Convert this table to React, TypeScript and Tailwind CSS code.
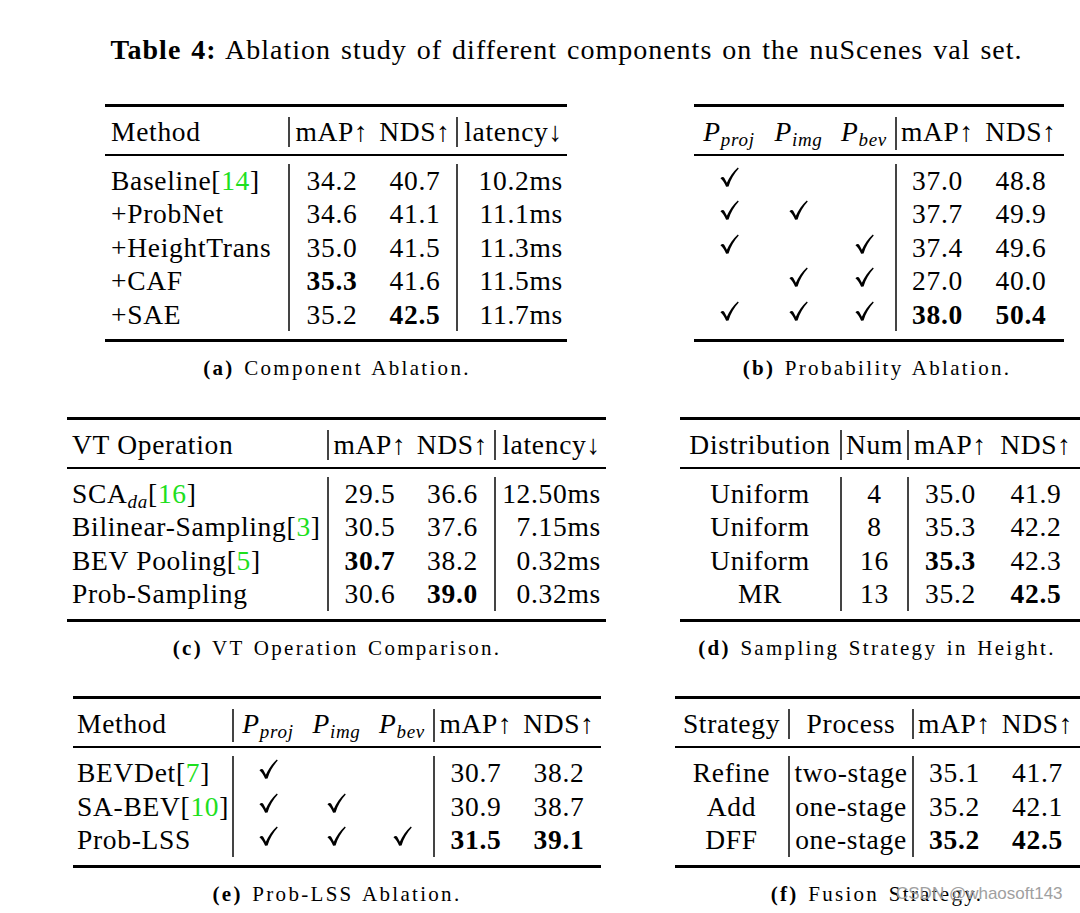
import React from "react";

type Col = { cls: string; v?: boolean };

const VL = "border-l-2 border-[#444]";

function G({ children }: { children: React.ReactNode }) {
  return <span className="text-[#1ee01e]">{children}</span>;
}

function B({ children }: { children: React.ReactNode }) {
  return <span className="font-bold">{children}</span>;
}

function Check() {
  return (
    <svg
      viewBox="0 0 18 19"
      className="inline-block w-[19px] h-[20px] align-[3px]"
      aria-hidden="true"
    >
      <path
        d="M0.4 10.6 C1.8 9.3 3.3 9.1 4.1 10.4 C4.9 11.7 5.6 13.2 6.5 15 C8.8 9.7 12.2 4.7 16.9 0.5 L17.8 1.5 C13.3 6.3 10.3 11.7 8.1 18.5 L5.8 18.8 C4.4 15.4 2.8 12.7 0.4 10.6 Z"
        fill="#000"
      />
    </svg>
  );
}

function P({ s }: { s: string }) {
  return (
    <span className="italic">
      P
      <span className="relative top-[5px] text-[19px]">{s}</span>
    </span>
  );
}

function Table({
  outer,
  grid,
  cols,
  head,
  rows,
}: {
  outer: string;
  grid: string;
  cols: Col[];
  head: React.ReactNode[];
  rows: React.ReactNode[][];
}) {
  return (
    <div className={`${outer} border-t-[3px] border-b-[3px] border-black text-[27.5px] tracking-[0.7px] whitespace-nowrap`}>
      <div className="pt-[10px] pb-[7px] border-b-2 border-black">
        <div className={`${grid} h-[30px] leading-[30px]`}>
          {head.map((h, i) => (
            <div key={i} className={`${cols[i].cls} ${cols[i].v ? VL : ""}`}>
              {h}
            </div>
          ))}
        </div>
      </div>
      <div className="pt-[8px] pb-[8px]">
        {rows.map((r, ri) => (
          <div key={ri} className={`${grid} h-[33.5px] leading-[33.5px]`}>
            {r.map((c, i) => (
              <div key={i} className={`${cols[i].cls} ${cols[i].v ? VL : ""}`}>
                {c}
              </div>
            ))}
          </div>
        ))}
      </div>
    </div>
  );
}

function Caption({ label, text }: { label: string; text: string }) {
  return (
    <div className="mt-[14px] h-[24px] leading-[24px] text-[21px] tracking-[2.3px] [word-spacing:2px] text-center whitespace-nowrap">
      <span className="font-bold">({label})</span> {text}
    </div>
  );
}

const C = "text-center";

export default function App() {
  const ck = <Check />;
  return (
    <div className="w-[1080px] h-[913px] overflow-hidden bg-white text-black font-['Liberation_Serif',serif]">
      <div className="pt-[34px]">
        <div className="ml-[110px] w-[913px] flex justify-center text-[28px] leading-[32px] whitespace-nowrap tracking-[1px] [word-spacing:2px]">
          <span>
            <span className="font-bold">Table 4:</span> Ablation study of different components on the nuScenes val set.
          </span>
        </div>

        {/* Row 1 */}
        <div className="mt-[37.5px] flex">
          <div className="w-[674px] shrink-0">
            <Table
              outer="ml-[105px] w-[462px]"
              grid="grid grid-cols-[183px_86px_82px_111px]"
              cols={[
                { cls: "pl-[6px] text-left" },
                { cls: C, v: true },
                { cls: C },
                { cls: "pr-[4px] text-right", v: true },
              ]}
              head={["Method", "mAP↑", "NDS↑", "latency↓"]}
              rows={[
                [<>Baseline[<G>14</G>]</>, "34.2", "40.7", "10.2ms"],
                ["+ProbNet", "34.6", "41.1", "11.1ms"],
                ["+HeightTrans", "35.0", "41.5", "11.3ms"],
                ["+CAF", <B>35.3</B>, "41.6", "11.5ms"],
                ["+SAE", "35.2", <B>42.5</B>, "11.7ms"],
              ]}
            />
            <Caption label="a" text="Component Ablation." />
          </div>
          <div className="w-[406px] shrink-0">
            <Table
              outer="ml-[20px] w-[370px]"
              grid="grid grid-cols-[70px_69px_62px_83px_86px]"
              cols={[{ cls: C }, { cls: C }, { cls: C }, { cls: C, v: true }, { cls: C }]}
              head={[<P s="proj" />, <P s="img" />, <P s="bev" />, "mAP↑", "NDS↑"]}
              rows={[
                [ck, "", "", "37.0", "48.8"],
                [ck, ck, "", "37.7", "49.9"],
                [ck, "", ck, "37.4", "49.6"],
                ["", ck, ck, "27.0", "40.0"],
                [ck, ck, ck, <B>38.0</B>, <B>50.4</B>],
              ]}
            />
            <Caption label="b" text="Probability Ablation." />
          </div>
        </div>

        {/* Row 2 */}
        <div className="mt-[36.5px] flex">
          <div className="w-[674px] shrink-0">
            <Table
              outer="ml-[67px] w-[539px]"
              grid="grid grid-cols-[260px_84px_83px_112px]"
              cols={[
                { cls: "pl-[5px] text-left" },
                { cls: C, v: true },
                { cls: C },
                { cls: "pr-[5px] text-right", v: true },
              ]}
              head={["VT Operation", "mAP↑", "NDS↑", "latency↓"]}
              rows={[
                [
                  <>
                    SCA<span className="relative top-[5px] text-[19px] italic">da</span>[<G>16</G>]
                  </>,
                  "29.5",
                  "36.6",
                  "12.50ms",
                ],
                [<>Bilinear-Sampling[<G>3</G>]</>, "30.5", "37.6", "7.15ms"],
                [<>BEV Pooling[<G>5</G>]</>, <B>30.7</B>, "38.2", "0.32ms"],
                ["Prob-Sampling", "30.6", <B>39.0</B>, "0.32ms"],
              ]}
            />
            <Caption label="c" text="VT Operation Comparison." />
          </div>
          <div className="w-[406px] shrink-0">
            <Table
              outer="ml-[6px] w-[400px]"
              grid="grid grid-cols-[160px_67px_85px_88px]"
              cols={[{ cls: C }, { cls: C, v: true }, { cls: C, v: true }, { cls: C }]}
              head={["Distribution", "Num", "mAP↑", "NDS↑"]}
              rows={[
                ["Uniform", "4", "35.0", "41.9"],
                ["Uniform", "8", "35.3", "42.2"],
                ["Uniform", "16", <B>35.3</B>, "42.3"],
                ["MR", "13", "35.2", <B>42.5</B>],
              ]}
            />
            <Caption label="d" text="Sampling Strategy in Height." />
          </div>
        </div>

        {/* Row 3 */}
        <div className="mt-[36.5px] flex">
          <div className="w-[674px] shrink-0">
            <Table
              outer="ml-[73px] w-[528px]"
              grid="grid grid-cols-[159px_70px_69px_62px_84px_84px]"
              cols={[
                { cls: "pl-[4px] text-left" },
                { cls: C, v: true },
                { cls: C },
                { cls: C },
                { cls: C, v: true },
                { cls: C },
              ]}
              head={["Method", <P s="proj" />, <P s="img" />, <P s="bev" />, "mAP↑", "NDS↑"]}
              rows={[
                [<>BEVDet[<G>7</G>]</>, ck, "", "", "30.7", "38.2"],
                [<>SA-BEV[<G>10</G>]</>, ck, ck, "", "30.9", "38.7"],
                ["Prob-LSS", ck, ck, ck, <B>31.5</B>, <B>39.1</B>],
              ]}
            />
            <Caption label="e" text="Prob-LSS Ablation." />
          </div>
          <div className="w-[406px] shrink-0 relative">
            <Table
              outer="ml-[1px] w-[405px]"
              grid="grid grid-cols-[113px_124px_83px_85px]"
              cols={[{ cls: C }, { cls: C, v: true }, { cls: C, v: true }, { cls: C }]}
              head={["Strategy", "Process", "mAP↑", "NDS↑"]}
              rows={[
                ["Refine", "two-stage", "35.1", "41.7"],
                ["Add", "one-stage", "35.2", "42.1"],
                ["DFF", "one-stage", <B>35.2</B>, <B>42.5</B>],
              ]}
            />
            <div className="relative">
              <Caption label="f" text="Fusion Strategy." />
              <div className="absolute left-[222px] top-0 leading-[24px] text-[17px] text-[#a0a0a0] font-['Liberation_Sans',sans-serif] whitespace-nowrap">
                CSDN @whaosoft143
              </div>
            </div>
          </div>
        </div>
      </div>
    </div>
  );
}
